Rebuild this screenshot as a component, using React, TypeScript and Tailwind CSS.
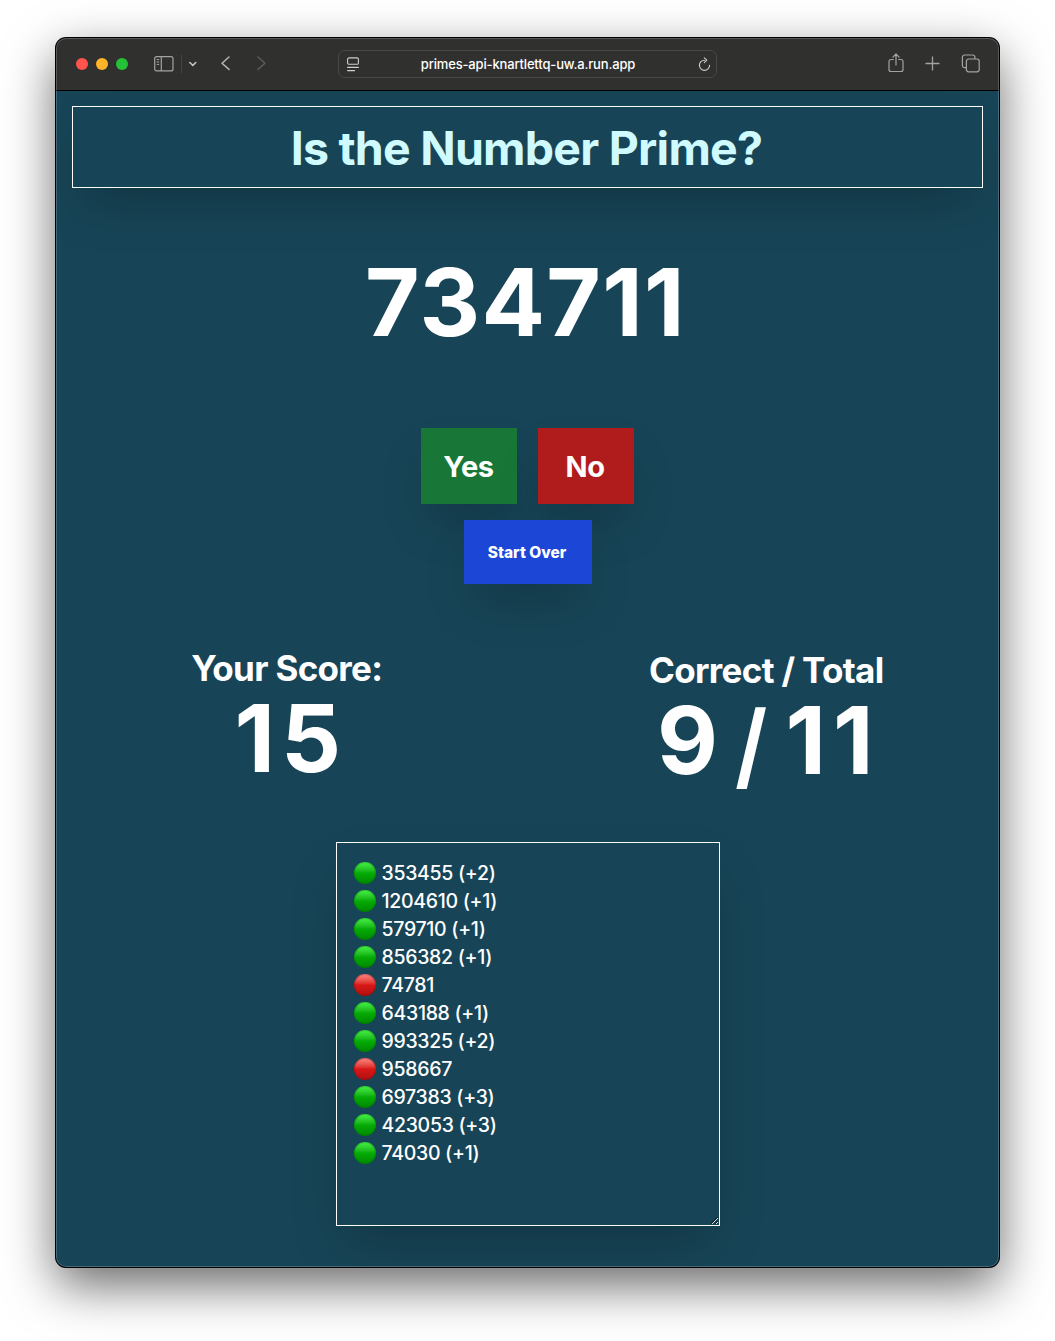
import React from 'react';

const history: [string, boolean][] = [
  ['353455 (+2)', true],
  ['1204610 (+1)', true],
  ['579710 (+1)', true],
  ['856382 (+1)', true],
  ['74781', false],
  ['643188 (+1)', true],
  ['993325 (+2)', true],
  ['958667', false],
  ['697383 (+3)', true],
  ['423053 (+3)', true],
  ['74030 (+1)', true],
];

function Toolbar() {
  return (
    <header className="grid h-[53px] grid-cols-[282px_379px_282px] items-center border-b border-black bg-[#30302f]">
      <div className="flex items-center pl-5">
        <div className="flex gap-2">
          <span className="size-3 rounded-full bg-[#ff544d]" />
          <span className="size-3 rounded-full bg-[#ffb429]" />
          <span className="size-3 rounded-full bg-[#25c138]" />
        </div>
        <svg className="-mt-px ml-[26px]" width="20" height="16" viewBox="0 0 20 16" fill="none" stroke="#a3a3a2" strokeWidth="1.2">
          <rect x="0.7" y="0.7" width="18.3" height="14.2" rx="2" />
          <path d="M7.3 .7v14.2" />
          <path d="M2.6 3.6h2.6M2.6 6h2.6M2.6 8.4h2.6" strokeWidth="1" />
        </svg>
        <span className="ml-[7px] h-[18px] w-px bg-[#444443]" />
        <svg className="ml-[7px]" width="8" height="6" viewBox="0 0 8 6" fill="none" stroke="#c4c4c3" strokeWidth="1.6" strokeLinecap="round" strokeLinejoin="round">
          <path d="M.8 1.5 3.8 4.3 6.8 1.5" />
        </svg>
        <svg className="-mt-[2px] ml-6" width="9" height="15" viewBox="0 0 9 15" fill="none" stroke="#b5b5b4" strokeWidth="1.5" strokeLinecap="round" strokeLinejoin="round">
          <path d="M8 1 1 7.2 8 13.4" />
        </svg>
        <svg className="-mt-[2px] ml-[27px]" width="9" height="15" viewBox="0 0 9 15" fill="none" stroke="#5a5a59" strokeWidth="1.5" strokeLinecap="round" strokeLinejoin="round">
          <path d="M1 1 8 7.2 1 13.4" />
        </svg>
      </div>
      <div className="flex h-7 items-center justify-between rounded-[7px] border border-[#494948] pr-[5px] pl-2">
        <svg width="12" height="15" viewBox="0 0 12 15" fill="none" stroke="#d0d0cf" strokeWidth="1.1" strokeLinecap="round">
          <rect x="0.6" y="0.9" width="10.8" height="6.4" rx="1.4" />
          <path d="M.6 10.4h10.8M.6 13.6h7" />
        </svg>
        <span className="pt-px pr-px text-[13px] leading-none font-medium tracking-[-0.16px]">primes-api-knartlettq-uw.a.run.app</span>
        <svg width="13" height="15" viewBox="0 0 13 15" fill="none" stroke="#c9c9c8" strokeWidth="1.15" strokeLinecap="round" strokeLinejoin="round">
          <path d="M6.5 3.2a5.1 5.1 0 1 0 5.1 5.1M6.3 .9l2.5 2.3-2.5 2.5" />
        </svg>
      </div>
      <div className="flex items-center justify-end pr-[19px]">
        <svg className="-mt-[3px]" width="16" height="20" viewBox="0 0 16 20" fill="none" stroke="#a3a3a2" strokeWidth="1.2" strokeLinecap="round" strokeLinejoin="round">
          <path d="M5.3 6.5H3a2 2 0 0 0-2 2v8a2 2 0 0 0 2 2h10a2 2 0 0 0 2-2v-8a2 2 0 0 0-2-2h-2.3M8 12.1V1.2M4.9 4.1 8 1l3.1 3.1" />
        </svg>
        <svg className="-mt-[2px] ml-[21px]" width="15" height="15" viewBox="0 0 15 15" fill="none" stroke="#a3a3a2" strokeWidth="1.3" strokeLinecap="round">
          <path d="M7.5 1v13M1 7.5h13" />
        </svg>
        <svg className="-mt-[2px] ml-[21px]" width="19" height="19" viewBox="0 0 19 19" fill="none" stroke="#a3a3a2" strokeWidth="1.2" strokeLinejoin="round">
          <rect x="5.4" y="5" width="12.8" height="12.8" rx="2.2" />
          <path d="M5.4 13.7H3.6a2.2 2.2 0 0 1-2.2-2.2V3.2A2.2 2.2 0 0 1 3.6 1h8.1a2.2 2.2 0 0 1 2.2 2.2V5" />
        </svg>
      </div>
    </header>
  );
}

export default function App() {
  return (
    <div className="h-[1341px] w-[1055px] overflow-hidden bg-white pt-[38px] pl-[56px] font-['Inter',sans-serif]">
      <div className="relative h-[1229px] w-[943px] overflow-hidden rounded-[10px] bg-[#174557] text-white shadow-[0_0_0_1px_#000,0_18px_50px_rgba(0,0,0,0.6)] after:pointer-events-none after:absolute after:inset-0 after:rounded-[10px] after:shadow-[inset_0_0_0_1px_rgba(255,255,255,0.2)]">
        <Toolbar />
        <main className="px-4 pt-[15px]">
          <h1 className="flex h-[82px] items-center justify-center border border-white pt-[2px] pr-[2px] text-[46.5px] leading-none font-bold tracking-[-0.76px] text-[#cffafe] shadow-2xl">
            Is the Number Prime?
          </h1>
          <div className="mt-[66px] pr-[4px] text-center text-[94px] leading-[96px] font-bold tracking-[1.3px]">734711</div>
          <div className="mt-[78px] flex justify-center gap-[21px] text-[29px] font-bold tracking-[-0.4px]">
            <button className="h-[76px] w-24 bg-[#187736] pt-[2px] pr-px shadow-2xl">Yes</button>
            <button className="h-[76px] w-24 bg-[#b01b1b] pt-[2px] pr-[2px] shadow-2xl">No</button>
          </div>
          <div className="mt-4 flex justify-center">
            <button className="relative h-16 w-32 bg-[#1c46d6] pt-[2px] pr-px text-[15.5px] font-extrabold shadow-2xl">Start Over</button>
          </div>
          <section className="mt-16 grid grid-cols-2 gap-12 text-center font-bold">
            <div>
              <h2 className="pr-[2px] text-[35px] leading-10 tracking-[-0.67px]">Your Score:</h2>
              <p className="mt-[2px] pl-[6px] text-[94px] leading-[96px] tracking-[6px]">15</p>
            </div>
            <div className="pt-[2px]">
              <h2 className="pr-[2px] text-[35px] leading-10 tracking-[-0.67px]">Correct / Total</h2>
              <p className="mt-[2px] flex justify-center pl-[3px] text-[94px] leading-[96px]">
                <span>9</span>
                <span className="mr-[16px] ml-[15px] translate-y-[5px] scale-x-[0.87]">/</span>
                <span className="tracking-[7px]">11</span>
              </p>
            </div>
          </section>
          <div className="relative mx-auto mt-[54px] h-96 w-96 border border-white p-4 shadow-2xl">
            <ul className="pl-[0.5px] text-[19.5px] font-medium tracking-[-0.31px]">
              {history.map(([text, correct]) => (
                <li key={text} className="flex h-7 items-center gap-[6px] pl-[0.5px]">
                  <i
                    className={
                      correct
                        ? 'size-[22px] rounded-full bg-linear-to-b from-[#48f548] via-[#06ac06] via-50% to-[#008800] shadow-[inset_0_0_0_1px_rgba(0,100,0,0.25)]'
                        : 'size-[22px] rounded-full bg-linear-to-b from-[#ff8585] via-[#d91717] via-50% to-[#ae1010] shadow-[inset_0_0_0_1px_rgba(120,0,0,0.25)]'
                    }
                  />
                  <span className="pt-[2px]">{text}</span>
                </li>
              ))}
            </ul>
            <svg className="absolute right-0 bottom-0" width="9" height="9" viewBox="0 0 9 9" fill="none" strokeWidth="1">
              <path d="M1 7.5 7.5 1M5 7.5 7.5 5" stroke="#0b1418" />
              <path d="M2 8 8 2M6 8 8 6" stroke="#d5dde0" />
            </svg>
          </div>
        </main>
      </div>
    </div>
  );
}
